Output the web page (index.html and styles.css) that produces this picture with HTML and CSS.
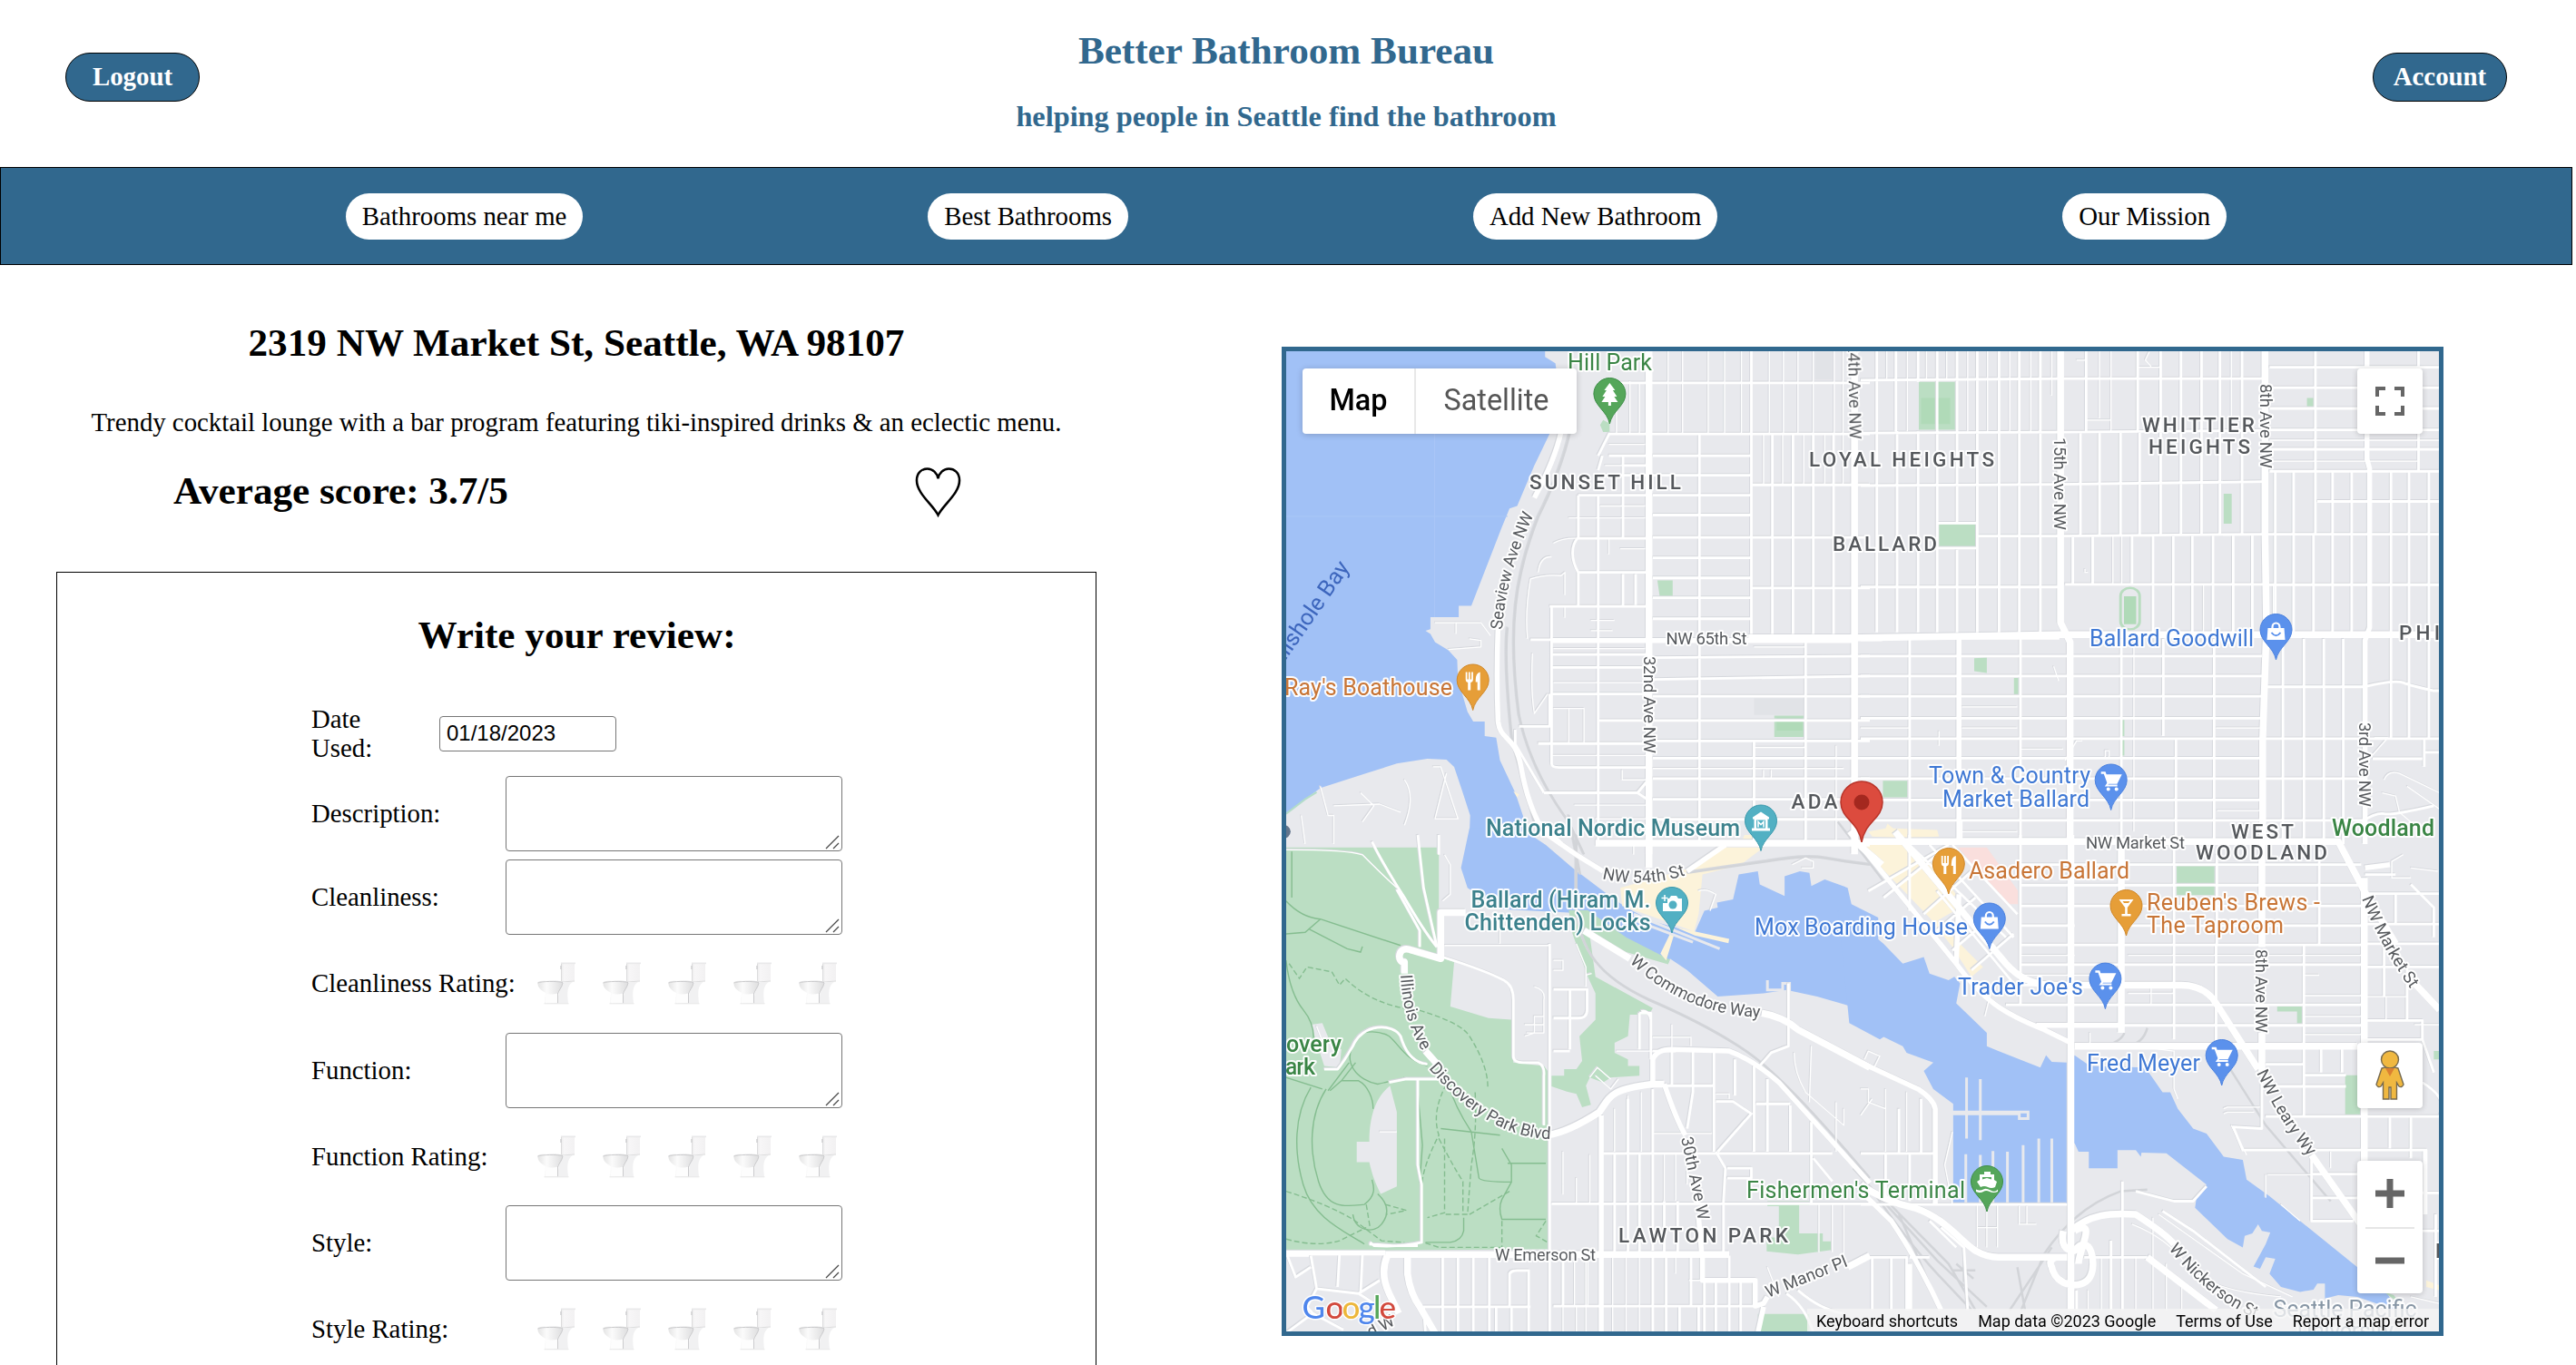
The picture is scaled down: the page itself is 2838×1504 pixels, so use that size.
FILE: index.html
```html
<!DOCTYPE html>
<html lang="en">
<head>
<meta charset="utf-8">
<title>Better Bathroom Bureau</title>
<link rel="stylesheet" href="styles.css">
</head>
<body>
<svg class="defs" width="0" height="0" aria-hidden="true">
  <defs>
    <linearGradient id="bowl" x1="0" y1="0" x2="1" y2="0"><stop offset="0" stop-color="#e4e4e4"/><stop offset=".35" stop-color="#fbfbfb"/><stop offset="1" stop-color="#dededf"/></linearGradient>
    <linearGradient id="tank" x1="0" y1="0" x2="1" y2="0"><stop offset="0" stop-color="#ececec"/><stop offset=".2" stop-color="#f7f6f7"/><stop offset="1" stop-color="#f2f1f2"/></linearGradient>
    <symbol id="toilet" viewBox="0 0 42 47">
      <path d="M26.500 2H41V21H30L26.500 22Z" fill="url(#tank)"/>
      <path d="M26 .500H42V2.200H26Z" fill="#e9e9ea"/>
      <path d="M26.500 2V21M27 22L41 21" stroke="#dcdcdd" fill="none"/>
      <path d="M26 4V8" stroke="#cfcfd0" stroke-width="1.500"/>
      <path d="M27 22H39C33 26 32.500 32 34 45.500H22L24 32Z" fill="#f1f1f2"/>
      <path d="M.500 22.500C1 20 25 19.500 28 22C28.500 27 24 31 22.500 34L22 45.500H8L9 34C4 31 0 28 .500 22.500Z" fill="url(#bowl)"/>
      <path d="M.500 23C5 21 22 21 28 22.500M22.500 34V45.500M28 23C27 28 23.500 31 22.500 35" fill="none" stroke="#cbcbcd"/>
      <path d="M9.500 34C13 36 18 36 22 34.500V45H9Z" fill="#fdfdfd"/>
      <path d="M7.500 45.800H34.500" stroke="#e6e6e6"/>
    </symbol>
    <symbol id="grip" viewBox="0 0 16 16"><path d="M1 15L15 1M9 15L15 9" stroke="#4a4a4a" stroke-width="1.300" fill="none"/></symbol>
    <path id="pin" d="M0 0C-2.500-14-17.500-20-17.500-33A17.500 17.500 0 0 1 17.500-33C17.500-20 2.500-14 0 0Z"/>
    <g id="food" fill="#fff"><path d="M-8-42h1.800v8h1.400v-8h1.800v8h1.400v-8H.200v8q0 3-2.700 3.500V-22h-3V-30.500Q-8-31-8-34ZM3-33q0-8 5-9v20H5v-9H3Z"/></g>
    <g id="cart"><path d="M-11-41h4l4 11H6l4-8H-6" fill="none" stroke="#fff" stroke-width="2.500"/><path d="M-5.500-38.500H10.500L6.500-30.500H-3Z" fill="#fff"/><path d="M-3-30l-2 3H7" fill="none" stroke="#fff" stroke-width="2"/><circle cx="-3" cy="-23" r="2" fill="#fff"/><circle cx="6" cy="-23" r="2" fill="#fff"/></g>
    <g id="bag"><path d="M-4-33v-3a4 4.500 0 0 1 8 0v3" fill="none" stroke="#fff" stroke-width="2.200"/><path d="M-9-35H9L10-22H-10Z" fill="#fff"/><path d="M-5-30q5 6.500 10 0" fill="none" stroke="#5b91ec" stroke-width="2"/></g>
  </defs>
</svg>

<header class="header">
  <button class="account-btn">Logout</button>
  <div class="brand">
    <h1 class="brand-name">Better Bathroom Bureau</h1>
    <h2 class="tagline">helping people in Seattle find the bathroom</h2>
  </div>
  <button class="account-btn">Account</button>
</header>
<nav class="nav">
  <a class="nav-link">Bathrooms near me</a>
  <a class="nav-link">Best Bathrooms</a>
  <a class="nav-link">Add New Bathroom</a>
  <a class="nav-link">Our Mission</a>
</nav>

<main class="main">
  <section class="details">
    <h2 class="address">2319 NW Market St, Seattle, WA 98107</h2>
    <p class="about">Trendy cocktail lounge with a bar program featuring tiki-inspired drinks &amp; an eclectic menu.</p>
    <div class="score-row">
      <h2 class="score">Average score: 3.7/5</h2>
      <svg class="heart" viewBox="0 0 52 56"><path d="M26 54C20 42 2 30 2 15C2 6 8 2 14 2C20 2 25 7 26 13C27 7 32 2 38 2C44 2 50 6 50 15C50 30 32 42 26 54Z" fill="none" stroke="#000" stroke-width="2.600"/></svg>
    </div>
    <form class="review">
      <h2 class="review-title">Write your review:</h2>
      <div class="row date-row"><label class="date-label">Date Used:</label><input class="date" type="text" value="01/18/2023"></div>
      <div class="row"><label>Description:</label><div class="area"><textarea></textarea><svg class="grip"><use href="#grip"/></svg></div></div>
      <div class="row"><label>Cleanliness:</label><div class="area"><textarea></textarea><svg class="grip"><use href="#grip"/></svg></div></div>
      <div class="row rating-row"><label>Cleanliness Rating:</label><div class="rating"><svg><use href="#toilet"/></svg><svg><use href="#toilet"/></svg><svg><use href="#toilet"/></svg><svg><use href="#toilet"/></svg><svg><use href="#toilet"/></svg></div></div>
      <div class="row"><label>Function:</label><div class="area"><textarea></textarea><svg class="grip"><use href="#grip"/></svg></div></div>
      <div class="row rating-row"><label>Function Rating:</label><div class="rating"><svg><use href="#toilet"/></svg><svg><use href="#toilet"/></svg><svg><use href="#toilet"/></svg><svg><use href="#toilet"/></svg><svg><use href="#toilet"/></svg></div></div>
      <div class="row"><label>Style:</label><div class="area"><textarea></textarea><svg class="grip"><use href="#grip"/></svg></div></div>
      <div class="row rating-row"><label>Style Rating:</label><div class="rating"><svg><use href="#toilet"/></svg><svg><use href="#toilet"/></svg><svg><use href="#toilet"/></svg><svg><use href="#toilet"/></svg><svg><use href="#toilet"/></svg></div></div>
    </form>
  </section>

  <section class="map">
    <svg class="map-canvas" viewBox="1417 387 1270 1080">
      <rect x="1417" y="387" width="1270" height="1080" fill="#e8e9ed"/>
      <!-- land use and water, northwest tile -->
      <g transform="translate(1400 370) scale(.4209 .3571)">
        <path class="water" d="M40 0H718V65L745 85L748 110L735 290L690 400L645 525L625 533L605 590L525 833H492V868H418V905L405 910L418 920L430 945L465 970L488 1000L490 1060L515 1160L530 1190H560V1235L590 1240L600 1310L640 1410L660 1480L680 1600H518L522 1480L500 1400L480 1330L460 1308L410 1305L330 1320L250 1350L130 1395L90 1430L40 1475Z"/>
        <path class="water-seam" d="M429 300V868M40 557H620"/>
        <path class="park" d="M870 260L887 270V297H870L862 275ZM1012 755H1052V804H1018ZM1318 1172H1396V1238H1318Z"/>
        <path class="park-deep" d="M1324 1178H1392V1218H1324Z"/>
        <path d="M1265 1118H1396V1170H1265ZM1424 49H1470V135H1424Z" fill="#e1e3e7"/>
        <path d="M40 1475L90 1430L120 1408" class="coast"/>
        <path class="shop" d="M1240 1540H1290V1568H1230ZM635 1405L650 1415L645 1425Z"/>
        <circle cx="30" cy="1530" r="22" fill="#62758c"/>
      </g>
      <!-- northeast tile -->
      <g transform="translate(2050 370) scale(.4209 .3571)">
        <path class="park" d="M152 142H252V290H152ZM205 582H305V651H205ZM950 487H971V580H950ZM1168 192H1188V220H1168ZM297 995L330 993V1040L297 1035ZM401 1056H413V1108H401ZM58 1373H122V1424H58ZM683 1185H690V1235H683ZM683 1247H690V1295H683Z"/>
        <path class="park-deep" d="M158 192H234V272H158ZM689 804H721V890H689Z"/>
        <rect x="680" y="778" width="50" height="128" rx="25" fill="none" stroke="#b9ddc0" stroke-width="7"/>
        <path class="shop" d="M20 1530L65 1520L70 1505L85 1520L200 1525L205 1545L100 1550L30 1545Z"/>
      </g>
      <!-- southwest tile -->
      <g transform="translate(1400 920) scale(.4209 .3635)">
        <path class="water" d="M520-20L498 100L515 160L600 225L780 235L830 265L900 310L960 350L1040 390L1045 375L1090 410L1170 490L1290 480L1350 470L1430 490L1520 520L1590 610V250L1520 210L1510 160L1450 135L1415 155L1410 115L1385 110L1345 125V185L1280 150L1275 110L1225 120L1210 195L1168 205L1170 220L1135 230L1110 295L1000 262L930 220L870 170L790 100L720 30L655-20Z"/>
        <path class="park" d="M40 38H440V370L480 385L470 520L570 555L630 560L635 690L715 700L728 720V1255L40 1262ZM780 228H830L930 310L1045 378L1040 392L930 355L835 305L850 430L1000 525L990 545H940L935 610L900 630V660L935 680V700H965V730L890 735L870 750L835 735L825 760L838 818L815 825L800 785L775 778L735 762V730H768V710H800L815 685L808 610L850 560V480L830 430L790 300ZM1300 1110H1410V1122H1383V1208H1445V1232H1468V1258L1380 1272L1298 1262V1220H1330V1125H1300ZM1275 1452H1410V1508H1275Z"/>
        <path class="land" d="M312 760C280 790 258 840 258 930H225V992H258C265 1030 275 1060 288 1088L330 1065V840ZM105 575L135 570L160 640L185 650L180 705L140 700Z"/>
        <path class="trail" d="M55 50V190M40 200Q80 250 130 255L340 335M130 255L90 295L40 300M100 285L200 345L235 355L240 338M40 380Q50 480 85 530T110 640M135 770L40 735M105 765C60 850 60 960 85 1060S190 1200 245 1240M145 770C100 850 100 960 125 1050S200 1125 245 1120M185 745H230C255 760 268 800 268 830M222 690L185 745L155 775M205 690L150 775M245 1120C280 1090 268 1060 265 1045M280 1088C310 1120 310 1150 290 1180S220 1200 215 1150M240 600Q280 590 310 610C340 640 350 680 410 700M225 620C180 690 230 745 280 755Q340 740 350 735M385 780L397 940L390 1055M465 755Q480 820 525 900L545 1040Q550 1052 630 1052V1000L605 950M445 890L600 910M620 995H720M630 1052L605 1105Q595 1130 605 1165H720M505 1160V1200Q500 1230 470 1235H405"/>
        <path class="trail dashed" d="M48 390L75 435L95 400L160 415L180 455L195 435Q270 520 390 532Q500 570 520 610Q570 700 568 770M40 1080Q150 1120 215 1165L290 1230L350 1235M40 1225Q120 1250 180 1230L250 1190M460 755Q420 840 440 910Q400 1000 395 1060M455 920V1145L410 1160M535 780Q540 900 525 1000L515 1150L455 1150M440 920Q480 1010 503 1050V1145M520 1150L625 1080M605 1170V1250H440L400 1235M720 1170L695 1215L725 1235M250 1120L260 1190M300 1120L355 1138L305 1150"/>
        <path class="shop" d="M915 160L1100 100L1180 38H1290L1230 90L1130 120L1120 240L1108 292L920 215ZM1045 300L1055 305L1035 380L1020 360ZM1060 280L1200 315L1198 328L1110 305Z"/>
        <path class="pier" d="M945 255L1105 325M950 240L1175 345M1300 440V470H1340V450H1358V490"/>
      </g>
      <!-- southeast tile -->
      <g transform="translate(2050 920) scale(.4209 .3635)">
        <path class="water" d="M-60 230L0 270L60 330L110 390L165 370L180 420L230 440L245 430L260 450L250 510L330 600V640L360 655L470 705L485 668L500 688L540 690L560 668L600 700L745 705L790 780H810L830 830L870 890L905 905L950 975L1000 985L1010 1045L1070 1095L1300 1310L1380 1392L1400 1440L1300 1400L1250 1395L1215 1405L1215 1360H1195L1185 1378L1150 1385L1100 1370L1070 1330L1085 1285L1060 1280L1045 1315L1028 1308L1060 1240L1072 1205L1050 1200L1040 1180L1025 1208L1005 1215L1000 1250L960 1225L875 1130L880 1090L905 1060L800 965L735 963L733 975L720 955H672V1010H597V960H570L560 935H540V1118H242V815L190 770L165 715L190 690L120 660L110 640L60 612L50 620L-30 570Z"/>
        <path class="park" d="M827 95H926V182H827ZM1268 728H1315V850H1268ZM110 75L145 40L115 95ZM1090 520H1155V572H1142V535H1090ZM1500 655H1515V680H1500ZM1370 1385L1395 1395L1420 1430Z"/>
        <path class="shop" d="M0 30H110L260 220L200 260L320 400L290 430L240 340L180 250L30 70ZM135 40L190 90L250 180L220 210ZM1480 1350L1515 1365V1380L1480 1370Z"/>
        <path d="M255 38H330L412 170V210H380L290 85Z" fill="#fadfdd"/>
        <path class="pier" d="M240 840H438V860H415V845H240M277 735V920M313 740V925M275 968V1115M313 970V1115M346 958V1115M384 960V1115M425 940V1115M466 920V1115M500 920V1115"/>
        <path class="rail" d="M-60-40L60 140M-20 1010L200 1290L330 1430M20 1060Q120 1230 200 1330L290 1440M60 1100L230 1300L300 1440M100 1150L210 1440M420 1440L480 1270Q560 1130 680 1080L750 1075M430 1440L410 1310M390 1440L500 1250M940 660L1060 880L1230 1110M690 600Q680 630 630 640M750 585Q740 630 700 640M240 1320H300M250 1300L295 1345M270 1290V1355"/>
      </g>
      <g id="roads">
        <g transform="translate(1400 370) scale(.4209 .3571)">
          <path class="rail" d="M785 290Q760 420 700 560C640 740 620 900 650 1170Q680 1340 780 1500L820 1600M620 900Q610 1000 632 1250L690 1500"/>
          <path class="r1" d="M1040 30V300M1078 30V300M1145 30V300M1188 30V300M1232 30V300M1305 30V300M1342 30V300M1380 30V300M1420 30V300M1475 30V300M905 140V300M940 140V300M965 145V300M1290 300V460M1340 300V460M1395 300V460M1450 300V460M1498 30V460M885 335H980M875 400H980M862 525H980M780 562H980M885 622V675M915 657H980M740 640Q765 622 805 625M700 730Q705 680 735 682M680 750Q720 735 760 740L770 730V800M680 750Q665 850 672 935M740 1150H820V1255M780 1150V1255M685 980Q680 1100 690 1165L725 1105M838 878H900M838 910H895M740 965H980M740 1023H980M740 1070H980M735 1295H985M920 1340V1370H985M1265 960H1400M1265 1270H1400M1000 1335H1500M795 1448H985M430 885H550L575 925M485 885V920M520 935L550 940V960L465 968M425 1330H445L490 1490H430L460 1350M350 1370Q380 1420 350 1510M165 1450L285 1445L340 1470M235 1410L270 1450L240 1500M130 1390L150 1480L165 1480V1568M80 1480L90 1568M770 835V870M735 880V930M850 1490H1500M1290 1340V1365M1310 1340V1365M1480 1265V1568"/>
          <path class="r2" d="M857 370L887 300M857 490V1568M857 415L868 370M1122 300V1568M1258 30V920M1265 1250V1568M1400 935V1568M735 835V930M735 930V1320Q735 1332 755 1332H985M805 492V622Q790 640 790 670T805 730V835M922 370V622M922 735V835M955 735V830M1313 303V920M1367 303V920M1420 303V920M1473 303V920M890 145H1568M885 303H1568M885 370H985M920 400H985M868 430H985M1000 370H1258M1000 430H1258M1000 492H1258M1000 553H1258M1000 622H1258M1000 685H1258M1000 747H1258M1000 808H1258M1000 873H1258M1258 460H1568M1258 622H1568M1258 778H1568M805 492H985M805 625H985M805 730H985M730 835H985M680 938H985M735 983H985M1000 993L1568 988M1000 1060L1568 1050M1000 1112H1568M735 1023H985M735 1105H985M857 1187H1568M700 1258H985M1000 1250H1568M1000 1303H1568M1000 1366H1568M1000 1430H1568M1000 1492H1568M650 1205H730V1105M715 1410H960L985 1375M960 1410L985 1430M640 1215V1260L715 1410"/>
          <path class="r3" d="M760 295Q745 380 690 500M595 900Q590 1050 595 1190C600 1250 640 1230 655 1330Q670 1430 700 1500L760 1568M735 940H1530"/>
          <path class="r4" d="M990 30V1600M1528 30V1600M1250 932H1600"/>
        </g>
        <g transform="translate(2050 370) scale(.4209 .3571)">
          <path class="r1" d="M68 30V132M122 30V295M172 30V132M225 30V132M280 30V295M332 30V295M390 30V295M445 30V295M500 30V185M625 30V255M590 260H655M655 30V295M725 97H785M755 50L745 75L760 95M970 30V295M565 75H590V50M0 1210H128M265 1145H410M265 1210H410M715 930V1530M420 1275H530M930 1210H1045M933 1465H1045M265 1495V1568M265 1530H410M265 1552H540M595 730H587V720M660 615V765M683 615V765M897 770V915M1080 770V900M1070 322H1515M1070 387H1458M270 1530H410M640 1300V1280H650V1300M535 1310L565 1250H580M1345 1240L1380 1240L1320 1320M1430 1390L1515 1460M1365 1410L1400 1420L1410 1470L1440 1500M1370 1370Q1380 1340 1410 1350L1515 1410M505 1020L518 1065M205 1220V1265"/>
          <path class="r2" d="M42 30V915M92 30V295M95 295V915M150 30V142M150 295V915M200 30V915M252 30V580M252 660V915M305 30V915M362 30V915M415 30V915M470 30V915M590 30V295M785 30V295M725 30V295M838 30V615M892 30V615M940 30V615M998 30V615M575 295V615M625 295V615M680 295V615M730 295V615M785 295V615M555 615V765M607 615V765M710 615V765M765 615V915M818 615V915M868 615V915M922 615V915M975 615V915M1025 615V915M1085 420V915M1133 420V915M1190 30V610M1185 610V915M1235 420V915M1285 420V915M1388 420V1240M1435 420V1240M1487 420V1240M1460 30V415M1105 935V1568M1160 935V1568M1212 935V1568M1263 935V1568M128 935V1568M418 935V1568M682 935V1568M792 935V1235M825 1240V1568M925 935V1568M0 137L530 132H1058M0 300L520 297L1058 292M0 462L520 458L1058 450M305 618H520L1058 612M198 578H305M198 655H305M0 775H520M535 767H1058M1070 97H1515M1070 160H1515M1070 224H1515M1070 290H1515M1070 350H1515M1070 418H1515M1195 511H1515M1058 612H1515M1058 768H1515M0 988H1050M0 1050H1050M0 1112H1050M0 1180H1050M0 1243H1515M0 1303H1050M0 1366H1315M0 1432H1050M0 1495H1315M1060 1083H1315Q1400 1060 1420 1070T1500 1095H1515M1310 1500Q1350 1470 1370 1475T1500 1450M1475 1240V1330M1340 1305H1470M1475 1285H1515"/>
          <path class="r3" d="M257 935V1568M0 930H520M1325 30V380L1332 410V900L1320 940V1568"/>
          <path class="r4" d="M523 30V885L548 945V1568M1058 30V600L1062 900L1052 1250V1568M0 932L520 922H1515"/>
        </g>
        <g transform="translate(1400 920) scale(.4209 .3635)">
          <path class="rail" d="M800 0V220C810 350 860 430 990 500Q1150 580 1250 660T1568 1040M780-60L810 120M1090 115L1300 80Q1400 60 1450 70T1568 90"/>
          <path class="r1" d="M40 45Q200 45 240 60Q300 130 330 160M455 60L470 90V180L450 200M600 280V330M455 335H730M740 380H765V410H740M800 330L825 400V460M825 425L840 420M665 610L690 600V550H715V600H670M665 575H715M690 460Q720 470 715 500V550M1000 613H1100V640M1050 575V655M905 655H1000M835 735L855 705L890 740M850 730L890 770L910 740M1165 785H1200V800M900 960V830M935 960V790M970 960V780M1000 960V770M765 960V1090M800 1040V1115M835 970V1115M1030 965V1110M1060 965V1110M1090 965V1060M1415 640L1410 810M1370 660Q1370 720 1400 780L1500 880V830M1480 810V960M1435 1120V1265M1470 1120V1265M1500 1120V1300M285 900H330M765 1430V1508M800 1430V1508M965 1430V1508M1095 1350H1125M1300 1310L1330 1400M950 60V20M1365 90L1400 70L1420 80V100H1390M1120 170Q1140 160 1165 180L1150 230M120 580L140 640M1000 905H1155M795 1275V1430M825 1275V1508M830 1275V1430M895 1275V1508M930 1275V1508M965 1275V1430M1060 1270V1330"/>
          <path class="r2" d="M40 1265L65 1340L105 1310M105 1275L120 1375L230 1390L285 1350M240 1270L235 1390M40 1510L110 1450L190 1500M120 1375L95 1430L110 1450M180 1270L175 1370M230 1390L270 1420M385 0L400 160L435 340M265 20Q290 80 350 190Q400 290 435 340M440 0V60M330 165L390 290V340M450 370Q560 410 610 440Q635 455 635 500V670Q635 690 660 690H700Q718 700 715 730V880M730 330V1510M740 468H828V530Q828 555 805 555H740M783 468V650M740 655H783M965 540H995V680M965 540V650M970 535Q990 530 995 560M1000 655H1060M1050 655V760M1105 650V780L1090 890M1160 655V960M1215 680V790M1265 700V960M1300 740V960M1360 820V960M1415 870V1120M1355 450V640L1310 660L1280 700M1000 760H1160M1165 808H1210L1258 845L1170 960M1270 815H1360M870 965H1470M735 1118H1568M1000 770V1260M935 800V1265M900 965V1265M965 965V1265M1030 1110V1265M1065 1110V1265M1165 960L1190 1010L1185 1110V1265M1195 1010H1258V1040H1195M100 1275H40M300 1275V1330M405 1510L400 1430H680M450 1275V1508M490 1275V1508M530 1275V1508M572 1275V1508M625 1430V1330Q630 1320 645 1320H675V1508M590 1430V1508M630 1430V1508M740 1428H1270M765 1275V1428M1000 1275V1508M1035 1275V1508M1070 1430V1508M1100 1275V1430M1135 1350V1508M1165 1350V1508M1200 1275V1508M1230 1350V1508M385 1245H320L258 1240M385 740V1000L395 1060V1235Q340 1250 270 1245L260 1235M140 710H175Q190 690 215 640C240 570 320 570 340 610Q360 690 410 695M310 750L355 740H440M1420 980L1470 1050M1350 1390Q1400 1430 1420 1508M1380 1380Q1440 1440 1500 1450M1120 1430V1508"/>
          <path class="r3" d="M700-20L800 60L870 110M1090 110L1190 30M1530-10V30M1130 1265V1350H1268V1428L1290 1420L1300 1400M1290 1430L1275 1510M865 850V1510M1030 755Q1060 860 1085 910M1120 1160L1128 1270M1000 750V680Q1010 650 1050 650L1200 655Q1260 680 1330 750L1568 1055"/>
          <path class="r4" d="M358 1275V1330Q365 1390 390 1430L430 1510M305 1275Q285 1330 310 1390L335 1450M510 235H445V375L370 350C330 330 330 390 350 385V420M405 655L440 700M725 910Q780 900 860 840C890 790 890 770 1000 755H1030M820 290L940 375M1285 540Q1340 550 1380 590L1568 705M300 1272H1200M850 25H1568M990-10V100M1510 1310L1568 1275"/>
          <path class="r3" d="M40 1267H300"/>
          <path class="r4" d="M1530 20L1600 90"/>
        </g>
        <g transform="translate(2050 920) scale(.4209 .3635)">
          <path class="r1" d="M418 365H560M418 425H680M700 365H1310M700 480H820M760 460V515M1160 425H1200M950 830L960 825H1045M950 845L960 840H1030M970 880L1010 970M1450 575H1515M0 770H20V810L65 830M65 770V960M120 780V960M240 900L220 1000L240 1120M305 1120V1250M330 1120V1250M358 1120V1250M305 1190H358M415 1125V1180H460M435 1125V1180M710 1180Q800 1220 850 1300T1100 1400M780 1150L1000 1330L1130 1400M820 770L830 800M600 600V640M0 850L30 800M10 680L20 655L50 670L35 705L0 690M1065 1030H1180M1060 1030V1100M1100 1120L1150 1170M1230 1010V960M1420 60L1390 80V130H1440M1440 100L1510 110M1320 490H1430M1375 490V560M720 640L820 655V770M1160 550H1310M1160 605H1310M1160 487H1310M340 480L325 550M1440 1400L1515 1420M765 1160V1440M630 1280V1440M595 1380V1440M720 1280V1440M800 1300V1440M840 1350V1440"/>
          <path class="r2" d="M128 0V230M128 30L380 310M180 30L400 310M240 30L410 240M20 170L230 30M60 190L200 60M165 240L290 110M190 300L300 190M240 350L360 230M290 410L400 300M200 170L400 450M418 0V515M418 90H1310M418 152H1310M418 215H1310M418 275H560M700 275H1310M418 333H1310M418 393H1310M418 455H560M380 515H1310M820 0V620M932 60V330M930 330V640M1160 330V850M1200 50V330M1260 640V720M1050 152H1310M480 577H1310M1320 120H1400M1320 178H1515M1320 270H1515M1320 330H1515M1320 400H1515M1400 180V270M1370 270V490M1430 400V560M1440 150L1500 220V310M1320 562H1470V620L1500 720M1320 620H1470M1060 695H1160M1060 762H1270M1205 640V720M1160 728H1270M1050 640V890L975 885L1000 955H1310M1060 853H1515Q1540 800 1470 750M1385 850V950M1440 850V980M1180 980V1170H1290M1180 1028H1300M1180 1100H1300M1000 955H1480V1150M1470 1085H1515M1475 955V1150M1505 1150V1400M0 965H190M65 965V1110M128 965V1110M100 830V965M158 800V965M0 1120H240L540 1120M0 1280H120V1440M30 1280V1440M80 1280V1440M128 1280L180 1280M585 1280H750M210 1190L270 1250L280 1440M180 1170L250 1250M685 1050V1440M655 1230V1440M790 1140L870 1200L1060 1370M1320 1100V1200H1515M565 1440V1380M720 1080L820 1110H870L905 1065"/>
          <path class="r3" d="M-30-10L250 390C320 500 370 540 480 590L550 630M460 577H690M0 690L150 770Q190 800 195 830V1120M0 1080L80 1170Q150 1290 210 1440M257 180L250 390M128 1300V1440M1385 90L1320 100"/>
          <path class="r4" d="M0 20H1250L1318 170L1400 330M1450 450L1515 530M550 0V1440M682 40V600M1050 0V340M1050 600V720M1318 130V1000M90-10L380 390Q430 455 500 455H840Q900 455 930 510L1040 710M1180 970L1320 1200M0 1060Q60 1110 140 1130C220 1160 260 1230 300 1260Q330 1280 360 1280H540M560 640H1300M550 1200C600 1150 650 1145 720 1150Q800 1210 820 1240M530 1200Q520 1260 560 1260C600 1200 620 1300 600 1340C580 1380 510 1370 500 1310Q490 1290 510 1280M560 1200C620 1160 570 1260 570 1300M750 1280L930 1440"/>
        </g>
      </g>

      <defs>
        <path id="p-seaview" d="M1655 694C1658 650 1670 610 1691 565"/>
        <path id="p-bay" d="M1403 747L1499 609"/>
        <path id="p-54" d="M1765 968Q1810 979 1858 964"/>
        <path id="p-comm" d="M1795 1060Q1858 1119 1942 1121"/>
        <path id="p-ill" d="M1543 1074Q1545 1122 1567 1158"/>
        <path id="p-disc" d="M1574 1177Q1639 1254 1709 1255"/>
        <path id="p-30" d="M1852 1254Q1862 1300 1871 1345"/>
        <path id="p-manor" d="M1948 1430L2036 1395"/>
        <path id="p-nick" d="M2389 1376Q2438 1436 2490 1454"/>
        <path id="p-leary" d="M2486 1182Q2509 1232 2543 1274"/>
        <path id="p-market" d="M2602 990Q2621 1040 2656 1090"/>
      </defs>
      <g class="road-label">
        <text x="1835.600" y="710" textLength="89">NW 65th St</text>
        <text x="2298" y="935" textLength="109">NW Market St</text>
        <text x="1647" y="1389" textLength="111">W Emerson St</text>
        <text transform="translate(1811 723) rotate(90)" textLength="107">32nd Ave NW</text>
        <text transform="translate(2036 378) rotate(89)" textLength="106">24th Ave NW</text>
        <text transform="translate(2263 482) rotate(90)" textLength="102">15th Ave NW</text>
        <text transform="translate(2490 423) rotate(90)" textLength="93">8th Ave NW</text>
        <text transform="translate(2599 796) rotate(90)" textLength="93">3rd Ave NW</text>
        <text transform="translate(2485 1046) rotate(90)" textLength="92">8th Ave NW</text>
        <text textLength="132"><textPath href="#p-seaview">Seaview Ave NW</textPath></text>
        <text><textPath href="#p-54">NW 54th St</textPath></text>
        <text textLength="160"><textPath href="#p-comm">W Commodore Way</textPath></text>
        <text><textPath href="#p-ill">Illinois Ave</textPath></text>
        <text textLength="160"><textPath href="#p-disc">Discovery Park Blvd</textPath></text>
        <text><textPath href="#p-30">30th Ave W</textPath></text>
        <text><textPath href="#p-manor">W Manor Pl</textPath></text>
        <text textLength="124"><textPath href="#p-nick">W Nickerson St</textPath></text>
        <text><textPath href="#p-leary">NW Leary Wy</textPath></text>
        <text><textPath href="#p-market">NW Market St</textPath></text>
        <text transform="translate(1510 1474) rotate(-28)">d W</text>
      </g>
      <text class="bay"><textPath href="#p-bay">Shilshole Bay</textPath></text>
      <g class="area-label">
        <text x="1685" y="539" textLength="167">SUNSET HILL</text>
        <text x="1993" y="514" textLength="204">LOYAL HEIGHTS</text>
        <text x="2019" y="607" textLength="115">BALLARD</text>
        <text x="1973.500" y="891" textLength="51">ADA</text>
        <text x="2360" y="476" textLength="124">WHITTIER</text>
        <text x="2367" y="500" textLength="112">HEIGHTS</text>
        <text x="2643" y="705" textLength="45">PHI</text>
        <text x="2458" y="924" textLength="69">WEST</text>
        <text x="2419" y="947" textLength="145">WOODLAND</text>
        <text x="1783" y="1369" textLength="187">LAWTON PARK</text>
        <text x="2683" y="1386">N</text>
      </g>
      <g class="poi green">
        <text x="1727" y="408" textLength="93">Hill Park</text>
        <text x="1924" y="1320" textLength="241">Fishermen's Terminal</text>
        <g class="strong"><text x="2569" y="921" textLength="113">Woodland</text>
        <text x="1417" y="1159" textLength="61">overy</text>
        <text x="1416" y="1184" textLength="33">ark</text></g>
      </g>
      <g class="poi orange">
        <text x="1415" y="766" textLength="185">Ray's Boathouse</text>
        <text x="2169" y="968" textLength="177">Asadero Ballard</text>
        <text x="2365" y="1002.500" textLength="191">Reuben's Brews -</text>
        <text x="2365" y="1028" textLength="151">The Taproom</text>
      </g>
      <g class="poi blue">
        <text x="2302" y="712" textLength="181">Ballard Goodwill</text>
        <text x="2125" y="863" textLength="178">Town &amp; Country</text>
        <text x="2140" y="888.500" textLength="162">Market Ballard</text>
        <text x="1933" y="1030" textLength="235">Mox Boarding House</text>
        <text x="2157" y="1096" textLength="138">Trader Joe's</text>
        <text x="2299" y="1180" textLength="125">Fred Meyer</text>
      </g>
      <g class="poi teal">
        <text x="1637" y="921" textLength="280">National Nordic Museum</text>
        <text x="1620.500" y="1000" textLength="198">Ballard (Hiram M.</text>
        <text x="1613.500" y="1025" textLength="205">Chittenden) Locks</text>
      </g>
      <g class="poi grey">
        <text x="2504.500" y="1451" textLength="158">Seattle Pacific</text>
        <text x="2531" y="1475" textLength="106">University</text>
      </g>

      <g transform="translate(1773.400 467)"><use href="#pin" fill="#55a65a" stroke="#3b8c45"/><path d="M0-45L6-37H3.500L8-30H5L9-24H1.500V-20H-1.500V-24H-9L-5-30H-8L-3.500-37H-6Z" fill="#fff"/></g>
      <g transform="translate(2189 1335)"><use href="#pin" fill="#55a65a" stroke="#3b8c45"/><path d="M-3-44H4V-41H8V-35L11-33L9-27Q5-25 1-27T-7-27L-11-33L-8-35V-41H-3ZM-5-38V-35.500L0-37L5-35.500V-38ZM-12-24.500Q-7-22.500-4-24.500T4-23.500T12-24.500V-22Q7-20 3-22T-4-22T-12-22Z" fill="#fff" fill-rule="evenodd"/></g>
      <g transform="translate(1622.700 782.500)"><use href="#pin" fill="#e69e38" stroke="#cf8627"/><use href="#food"/></g>
      <g transform="translate(2146.800 985)"><use href="#pin" fill="#e69e38" stroke="#cf8627"/><use href="#food"/></g>
      <g transform="translate(2342.500 1031)"><use href="#pin" fill="#e69e38" stroke="#cf8627"/><path d="M-8-40H8L1.300-31V-24H5V-21.500H-5V-24H-1.300V-31ZM-4-38L-2.500-36H2.500L4-38Z" fill="#fff" fill-rule="evenodd"/></g>
      <g transform="translate(2507.500 727)"><use href="#pin" fill="#5b91ec" stroke="#4a80dd"/><use href="#bag"/></g>
      <g transform="translate(2191.800 1045.500)"><use href="#pin" fill="#5b91ec" stroke="#4a80dd"/><use href="#bag"/></g>
      <g transform="translate(2325.700 892.500)"><use href="#pin" fill="#5b91ec" stroke="#4a80dd"/><use href="#cart"/></g>
      <g transform="translate(2319.400 1111.600)"><use href="#pin" fill="#5b91ec" stroke="#4a80dd"/><use href="#cart"/></g>
      <g transform="translate(2447.700 1196)"><use href="#pin" fill="#5b91ec" stroke="#4a80dd"/><use href="#cart"/></g>
      <g transform="translate(1940 937.500)"><use href="#pin" fill="#52b0c3" stroke="#3a98ab"/><path d="M0-43L9-37V-35H7.500V-25H10V-22H-10V-25H-7.500V-35H-9V-37ZM-5-34V-25H5V-34Z" fill="#fff" fill-rule="evenodd"/><path d="M-3-26V-32L0-29L3-32V-26" fill="none" stroke="#fff" stroke-width="1.600"/></g>
      <g transform="translate(1842 1028)"><use href="#pin" fill="#52b0c3" stroke="#3a98ab"/><path d="M-3-38L-1-41H5L7-38H11V-24H-10V-33H-5V-38Z" fill="#fff"/><circle cx="1" cy="-31" r="4.500" fill="#52b0c3"/><path d="M-8-42V-35M-11.500-38.500H-4.500" stroke="#fff" stroke-width="1.500"/></g>
      <path d="M2051 928C2048 906 2028 902 2028 884A23 23 0 0 1 2074 884C2074 902 2054 906 2051 928Z" fill="#dc4b3e" stroke="#b93429" stroke-width="1.500"/>
      <circle cx="2051" cy="884" r="8.500" fill="#a4281f"/>
      <g class="google"><text y="1453"><tspan x="1434.500" fill="#4f86ec">G</tspan><tspan x="1460.500" fill="#d2493d">o</tspan><tspan x="1478.500" fill="#edb73b">o</tspan><tspan x="1496.500" fill="#4f86ec">g</tspan><tspan x="1513" fill="#55a65a">l</tspan><tspan x="1519.500" fill="#d2493d">e</tspan></text></g>
    </svg>

    <div class="map-type"><span class="type-btn active">Map</span><span class="type-btn">Satellite</span></div>
    <div class="control fullscreen"><svg viewBox="0 0 34 34" width="34" height="34"><path d="M12 3H3V12M22 3H31V12M31 22V31H22M12 31H3V22" fill="none" stroke="#666" stroke-width="4"/></svg></div>
    <div class="control pegman"><svg viewBox="0 0 32 56" width="32" height="56"><path d="M7 20Q16 17 25 20L31 38Q29 42 26 40L23.500 36V54H17V41H15V54H8.500V36L6 40Q3 42 1 38Z" fill="#f0b840" stroke="#75694f" stroke-width="1.400"/><circle cx="16" cy="10.500" r="9.500" fill="#f0b840" stroke="#75694f" stroke-width="1.400"/><path d="M11 20H21L16 29Z" fill="#db8031"/></svg></div>
    <div class="control zoom">
      <div class="zoom-btn"><svg viewBox="0 0 32 32" width="32" height="32"><path d="M0 16H32M16 0V32" stroke="#666" stroke-width="7"/></svg></div>
      <div class="zoom-btn"><svg viewBox="0 0 32 32" width="32" height="32"><path d="M0 16H32" stroke="#666" stroke-width="7"/></svg></div>
    </div>
    <div class="credits"><span>Keyboard shortcuts</span><span>Map data ©2023 Google</span><span>Terms of Use</span><span>Report a map error</span></div>
  </section>
</main>
</body>
</html>
```
FILE: styles.css
```css
* { box-sizing: border-box; }
body { margin: 0; width: 2834px; height: 1504px; overflow: hidden; background: #fff; color: #000; font-family: "Liberation Serif", "Times New Roman", serif; font-size: 28.800px; }
h1, h2, p { margin: 0; }
.defs { position: absolute; }

.header { height: 184px; display: flex; justify-content: space-between; align-items: flex-start; padding: 0 72px; }
.account-btn { margin-top: 58px; width: 148px; height: 54px; padding: 0 0 2px; border: 1px solid #000; border-radius: 27px; background: #31688e; color: #fff; font: bold 28.800px "Liberation Serif", serif; }
.brand { text-align: center; color: #31688e; padding-top: 31px; }
.brand-name { font-size: 43.200px; line-height: 50px; }
.tagline { font-size: 32.300px; line-height: 38px; margin-top: 28px; }

.nav { height: 108px; display: flex; justify-content: space-evenly; align-items: center; background: #31688e; border: 1px solid #000; }
.nav-link { height: 51px; line-height: 51px; padding: 0 18px; border-radius: 26px; background: #fff; }

.main { display: flex; align-items: flex-start; padding-left: 62px; }
.details { width: 1146px; flex: none; text-align: center; }
.address { font-size: 43.200px; line-height: 50px; margin-top: 61px; }
.about { line-height: 34px; margin-top: 45px; white-space: nowrap; }
.score-row { display: flex; justify-content: space-between; align-items: center; height: 56px; margin-top: 32px; padding: 0 149px 0 129px; }
.score { font-size: 43.200px; line-height: 50px; margin-top: -2px; }
.heart { width: 51px; height: 56px; }

.review { margin-top: 60px; height: 900px; border: 1px solid #000; padding: 44px 279px 0 280px; text-align: left; }
.review-title { font-size: 43.200px; line-height: 50px; text-align: center; margin-bottom: 50px; }
.row { display: flex; justify-content: space-between; align-items: center; height: 83px; margin-bottom: 9px; }
.row label { white-space: nowrap; }
.date-row { justify-content: flex-start; height: 66px; margin-bottom: 14px; }
.row .date-label { width: 141px; padding-right: 60px; line-height: 32.500px; white-space: normal; }
.date { width: 195px; height: 39px; border: 1px solid #767676; border-radius: 4px; padding: 0 7px; font: 24px "Liberation Sans", Arial, sans-serif; background: #fff; }
.area { position: relative; width: 371px; height: 83px; }
.area textarea { display: block; width: 100%; height: 100%; resize: none; border: 1px solid #767676; border-radius: 4px; background: #fff; }
.grip { position: absolute; right: 3px; bottom: 2px; width: 16px; height: 16px; }
.rating-row { height: 89.500px; }
.rating { display: flex; gap: 30px; margin-right: 6px; }
.rating svg { width: 42px; height: 47px; }

.map { position: relative; flex: none; width: 1280px; height: 1090px; margin: 90px 0 0 204px; border: 5px solid #31688e; overflow: hidden; font-family: Roboto, Arial, sans-serif; }
.map-canvas { display: block; width: 1270px; height: 1080px; }
.map-canvas path { vector-effect: non-scaling-stroke; }
.water { fill: #a1c1f6; }
.water-seam { stroke: #aac7f7; fill: none; }
.park { fill: #bbdec3; }
.park-deep { fill: #b0dab8; }
.land { fill: #e8e9ed; }
.shop { fill: #fcf3da; }
.coast { fill: none; stroke: #b3dcc9; stroke-width: 2; }
.trail { fill: none; stroke: #85bd90; stroke-width: 1.400; }
.dashed { stroke-dasharray: 6 3; }
.pier { fill: none; stroke: #e8e9ed; stroke-width: 3; }
.rail { fill: none; stroke: #d2d4d8; stroke-width: 2.500; }
.r1, .r2, .r3, .r4 { fill: none; stroke: #fff; stroke-linejoin: round; }
.r1 { stroke-width: 1.300; }
.r2 { stroke-width: 2.800; }
.r3 { stroke-width: 5.500; }
.r4 { stroke-width: 7.500; }
#roads { filter: drop-shadow(-.700px -.700px 0 #d6d8dd); }

.map-canvas text { font-family: Roboto, sans-serif; paint-order: stroke; stroke: #fffffff0; stroke-width: 4px; stroke-linejoin: round; }
.road-label { font-size: 18.500px; fill: #55585c; }
.area-label { font-size: 22.500px; font-weight: 500; fill: #55585c; }
.poi { font-size: 25px; }
.green { fill: #3a8545; }
.strong { font-weight: 500; }
.orange { fill: #c87536; }
.blue { fill: #3f78d4; }
.teal { fill: #3c818c; font-weight: 500; }
.grey { fill: #8796a5; }
.map-canvas .bay { font-size: 25px; fill: #3d66bd; stroke: none; }
.map-canvas .google text { font-family: Lato, sans-serif; font-size: 35px; font-weight: 500; stroke-width: 3px; }

.map-type { position: absolute; left: 18px; top: 19px; display: flex; width: 302px; height: 72px; background: #fff; border-radius: 4px; box-shadow: 0 1px 7px #0003; font-size: 32.400px; line-height: 71px; color: #565656; text-align: center; }
.type-btn { flex: 1; }
.type-btn.active { flex: 0 0 125px; border-right: 2px solid #e8e8e8; font-weight: 500; color: #000; }
.control { position: absolute; right: 18px; width: 72px; background: #fff; border-radius: 4px; box-shadow: 0 1px 6px #0003; display: flex; align-items: center; justify-content: center; }
.fullscreen { top: 19px; height: 72px; }
.pegman { top: 762px; height: 72px; }
.zoom { top: 892px; height: 146px; flex-direction: column; }
.zoom-btn { width: 54px; height: 73px; padding-bottom: 2px; display: flex; align-items: center; justify-content: center; }
.zoom-btn + .zoom-btn { border-top: 2px solid #e6e6e6; }
.credits { position: absolute; right: 0; bottom: 0; height: 25px; display: flex; gap: 22px; padding: 0 11px 0 10px; background: #f5f5f5c8; font-size: 18px; line-height: 28px; white-space: nowrap; }
```
